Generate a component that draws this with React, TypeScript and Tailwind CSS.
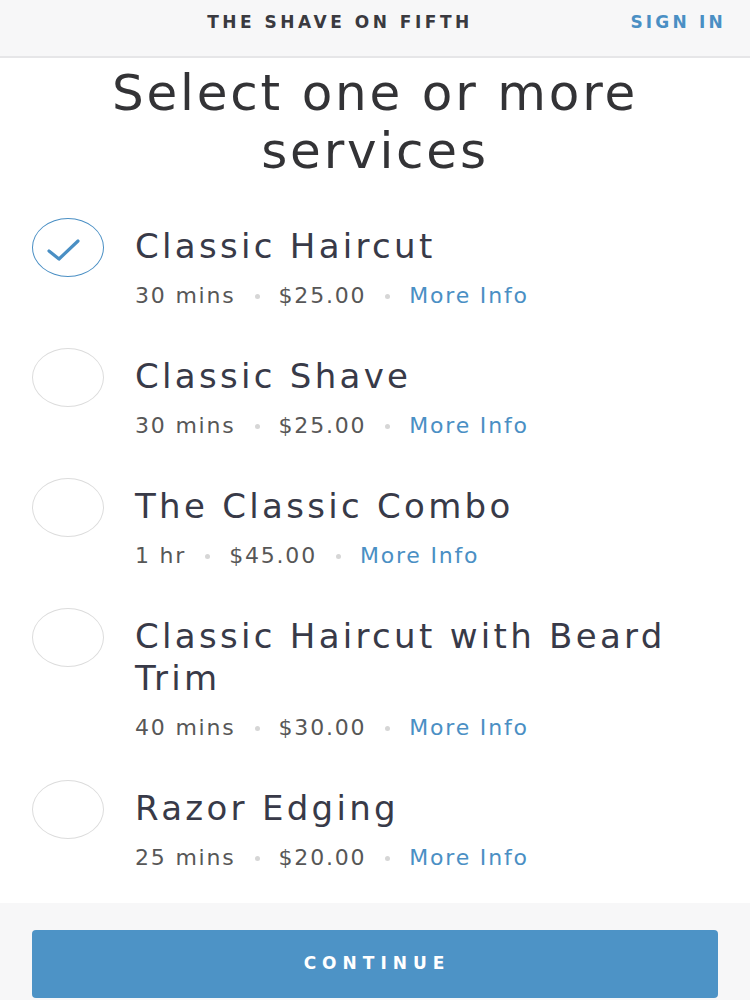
const services = [
  { name: 'Classic Haircut', duration: '30 mins', price: '$25.00', selected: true },
  { name: 'Classic Shave', duration: '30 mins', price: '$25.00', selected: false },
  { name: 'The Classic Combo', duration: '1 hr', price: '$45.00', selected: false },
  { name: 'Classic Haircut with Beard Trim', duration: '40 mins', price: '$30.00', selected: false },
  { name: 'Razor Edging', duration: '25 mins', price: '$20.00', selected: false },
]

function Dot() {
  return <span className="mx-[19px] h-[5px] w-[5px] shrink-0 rounded-full bg-[#d6d6d6]" />
}

function ServiceRow({ name, duration, price, selected }: (typeof services)[number]) {
  return (
    <div className="flex items-start pl-8 pr-6">
      {/* select ring */}
      <div
        className={`relative -mt-[7px] h-[59px] w-[72px] shrink-0 rounded-[50%] ${
          selected ? 'border-[1.5px] border-[#4a8fc4]' : 'border border-[#dcdcdc]'
        }`}
      >
        {selected && (
          <svg className="absolute left-0 top-0" width="72" height="59" viewBox="0 0 72 59" fill="none">
            <polyline
              points="16,32 26,40 45,22"
              stroke="#4a8fc4"
              strokeWidth="3.2"
              strokeLinecap="round"
              strokeLinejoin="round"
            />
          </svg>
        )}
      </div>
      <div className="ml-[31px] min-w-0">
        <div className="text-[34px] leading-[42px] tracking-[3.3px] text-[#383a48]">{name}</div>
        <div className="mt-[15px] flex items-center text-[22px] leading-[28px] tracking-[1.8px] text-[#575757]">
          <span>{duration}</span>
          <Dot />
          <span>{price}</span>
          <Dot />
          <span className="text-[#4a8fc4]">More Info</span>
        </div>
      </div>
    </div>
  )
}

export default function App() {
  return (
    <div className="flex h-[1000px] w-[750px] flex-col overflow-hidden bg-white font-['DejaVu_Sans',sans-serif]">
      {/* header */}
      <div className="relative flex h-[58px] shrink-0 justify-center border-b-2 border-[#e6e6e8] bg-[#f7f7f8] pt-[12px]">
        <span className="pr-[70px] text-[17px] font-bold leading-[20px] tracking-[3.5px] text-[#3a3a40]">
          THE SHAVE ON FIFTH
        </span>
        <span className="absolute right-[24px] top-[12px] text-[17px] font-bold leading-[20px] tracking-[3.2px] text-[#4a8fc4]">
          SIGN IN
        </span>
      </div>

      <h1 className="mt-[6px] text-center text-[50px] leading-[58px] tracking-[2.8px] text-[#333336]">
        Select one or more
        <br />
        services
      </h1>

      <div className="mt-[45px] flex flex-col gap-[45px]">
        {services.map((s) => (
          <ServiceRow key={s.name} {...s} />
        ))}
      </div>

      <div className="mt-auto bg-[#f7f7f8] px-8 pb-[2px] pt-[27px]">
        <button className="flex h-[68px] w-full items-center justify-center rounded-[4px] bg-[#4d93c6] pl-[4px] text-[17px] font-bold tracking-[6px] text-white">
          CONTINUE
        </button>
      </div>
    </div>
  )
}
